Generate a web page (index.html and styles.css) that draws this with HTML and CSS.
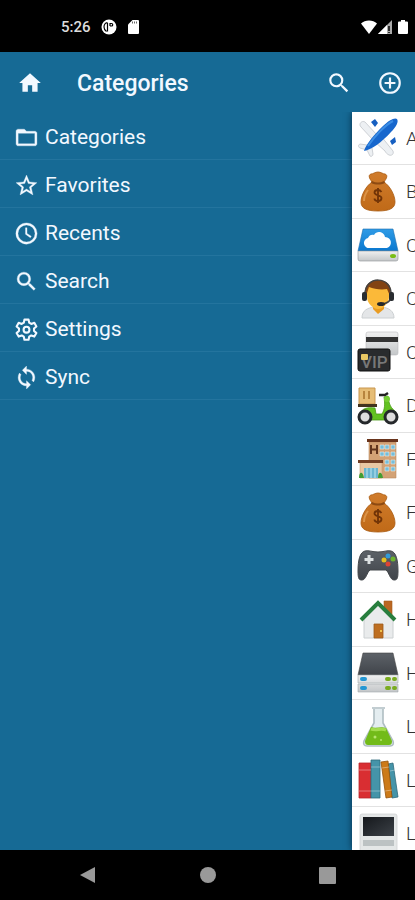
FILE: index.html
```html
<!DOCTYPE html>
<html lang="en">
<head>
  <meta charset="UTF-8">
  <meta name="viewport" content="width=device-width, initial-scale=1.0">
  <title>Categories</title>
  <link rel="stylesheet" href="styles.css">
</head>
<body>
  <!-- Shared drawings -->
  <svg class="defs" width="0" height="0" aria-hidden="true">
    <defs>
      <linearGradient id="bagFill" x1="0" y1="0" x2="0" y2="1">
        <stop offset="0" stop-color="#d07c2c"/><stop offset="1" stop-color="#c06a18"/>
      </linearGradient>
      <linearGradient id="metal" x1="0" y1="0" x2="0" y2="1">
        <stop offset="0" stop-color="#f0f0f0"/><stop offset="1" stop-color="#c4c7c9"/>
      </linearGradient>
      <linearGradient id="dark" x1="0" y1="0" x2="0" y2="1">
        <stop offset="0" stop-color="#5d6268"/><stop offset="1" stop-color="#40444a"/>
      </linearGradient>
      <linearGradient id="screen" x1="0" y1="0" x2="1" y2="1">
        <stop offset="0" stop-color="#15181c"/><stop offset="1" stop-color="#3c4147"/>
      </linearGradient>
      <linearGradient id="skyBlue" x1="0" y1="0" x2="0" y2="1">
        <stop offset="0" stop-color="#2f9be6"/><stop offset="1" stop-color="#0a78cf"/>
      </linearGradient>
      <symbol id="search" viewBox="0 0 24 24">
        <path d="M15.5 14h-.79l-.28-.27A6.47 6.47 0 0 0 16 9.5 6.5 6.5 0 1 0 9.5 16c1.61 0 3.09-.59 4.23-1.57l.27.28v.79l5 4.99L20.49 19l-4.99-5zm-6 0C7.01 14 5 11.99 5 9.5S7.01 5 9.5 5 14 7.01 14 9.5 11.99 14 9.5 14z"/>
      </symbol>
      <symbol id="bag" viewBox="0 0 42 42">
        <path d="M15 11C12 7 11 4 14 3c2 0 4-2 7-2s5 2 7 2c3 1 2 4-1 8 6 4 11 13 11 20 0 6-5 9-17 9S4 37 4 31c0-7 5-16 11-20z" fill="url(#bagFill)" stroke="#a8590f" stroke-width=".8"/>
        <path d="M15 10c4 2 8 2 12 0l1 2c-5 2-9 2-14 0z" fill="#8d4a12"/>
        <path d="M11 19c-3 4-4 7-4 11" fill="none" stroke="#dc9448" stroke-width="2"/>
        <path d="M24.500 21c-1-1.500-2-2-3.500-2-2.500 0-3.500 1-3.500 2.500 0 3.500 7 2 7 5.500 0 2-1.500 3-3.500 3s-3.500-1-3.500-2.500M21 17v15" fill="none" stroke="#713407" stroke-width="1.800"/>
      </symbol>
    </defs>
  </svg>

  <div class="status-bar">
    <span class="clock">5:26</span>
    <svg class="status-icon" viewBox="0 0 16 16"><circle cx="8" cy="8" r="7.500" fill="#fff"/><path d="M6.500 4v8.500M6.500 3.500C4 4 3 6 3 8s1 3.500 2.500 4.500M9 7V4.500h1.500a1.200 1.200 0 0 1 0 2.500H9" fill="none" stroke="#000" stroke-width="1.200"/></svg>
    <svg class="status-icon" viewBox="0 0 16 16"><path d="M7.500 1H13a1 1 0 0 1 1 1v12a1 1 0 0 1-1 1H4a1 1 0 0 1-1-1V5.500z" fill="#fff"/><path d="M7.500 2.500v2M9.500 2.500v2M11.500 2.500v2" stroke="#666"/></svg>
    <div class="signals">
      <svg width="16" height="16" viewBox="0 0 16 16"><path d="M8 15L0 4.500C2 2.500 5 1.500 8 1.500s6 1 8 3z" fill="#fff"/></svg>
      <svg width="16" height="16" viewBox="0 0 16 16"><path d="M1 15L15 1v14z" fill="#aaa"/><path d="M1 15l9-9v9z" fill="#fff"/><path d="M12 7v5M12 13v1" stroke="#000" stroke-width="1.500"/></svg>
      <svg class="battery" width="10" height="16" viewBox="0 0 10 16"><path d="M3 1h4v1.500h2a1 1 0 0 1 1 1V14a1 1 0 0 1-1 1H1a1 1 0 0 1-1-1V3.500a1 1 0 0 1 1-1h2z" fill="#fff"/></svg>
    </div>
  </div>

  <header class="app-bar">
    <button class="icon-button" aria-label="Home"><svg viewBox="0 0 24 24"><path d="M10 20v-6h4v6h5v-8h3L12 3 2 12h3v8z"/></svg></button>
    <h1>Categories</h1>
    <button class="icon-button" aria-label="Search"><svg viewBox="0 0 24 24"><use href="#search"/></svg></button>
    <button class="icon-button" aria-label="Add"><svg viewBox="0 0 24 24"><path d="M13 7h-2v4H7v2h4v4h2v-4h4v-2h-4V7zm-1-5a10 10 0 1 0 0 20 10 10 0 0 0 0-20zm0 18a8 8 0 1 1 0-16 8 8 0 0 1 0 16z"/></svg></button>
  </header>

  <main class="content">
    <nav class="drawer">
      <a href="#"><svg viewBox="0 0 24 24"><path d="M20 6h-8l-2-2H4c-1.100 0-2 .9-2 2v12c0 1.100.9 2 2 2h16c1.100 0 2-.9 2-2V8c0-1.100-.9-2-2-2zm0 12H4V8h16v10z"/></svg>Categories</a>
      <a href="#"><svg viewBox="0 0 24 24"><path d="M22 9.240l-7.190-.62L12 2 9.190 8.630 2 9.240l5.460 4.730L5.820 21 12 17.270 18.180 21l-1.630-7.030L22 9.240zM12 15.400l-3.760 2.270 1-4.280-3.320-2.880 4.380-.38L12 6.100l1.710 4.040 4.380.38-3.320 2.880 1 4.280L12 15.400z"/></svg>Favorites</a>
      <a href="#"><svg viewBox="0 0 24 24"><path d="M12 1.800a10.200 10.200 0 1 0 0 20.400 10.200 10.200 0 0 0 0-20.400zm0 18.400a8.200 8.200 0 1 1 0-16.400 8.200 8.200 0 0 1 0 16.400zM12.500 6.500H11v6.200l4.700 3.300.9-1.300-4.100-2.800z"/></svg>Recents</a>
      <a href="#"><svg viewBox="0 0 24 24"><use href="#search"/></svg>Search</a>
      <a href="#"><svg viewBox="0 0 24 24"><g fill="none" stroke="#f2f8ff" stroke-width="2" stroke-linejoin="round"><path d="M10 2.500h4l.6 3 2 1.200 2.900-1.100 2 3.500-2.300 2v2.200l2.300 2-2 3.500-2.900-1.100-2 1.200-.6 3h-4l-.6-3-2-1.200-2.900 1.100-2-3.500 2.300-2v-2.200l-2.300-2 2-3.500 2.900 1.100 2-1.200z"/><circle cx="12" cy="12.200" r="2.800"/></g></svg>Settings</a>
      <a href="#"><svg viewBox="0 0 24 24"><path d="M12 4V1L8 5l4 4V6c3.310 0 6 2.690 6 6 0 1.010-.25 1.970-.7 2.800l1.460 1.460A7.930 7.930 0 0 0 20 12c0-4.420-3.580-8-8-8zm0 14c-3.310 0-6-2.690-6-6 0-1.010.25-1.970.7-2.800L5.240 7.740A7.930 7.930 0 0 0 4 12c0 4.420 3.580 8 8 8v3l4-4-4-4v3z"/></svg>Sync</a>
    </nav>

    <ul class="category-list">
      <li>
        <svg viewBox="0 0 42 42"><g stroke="#c3c7cc" stroke-width=".8" fill="#edf0f3"><path d="M20 18L8 5C5 3 1 7 4 10l12 13zM24 19l12 15c1 3-1 5-4 4-2-1-3-2-4-4L18 25zM10 28l-7-1c-2 1-2 3 0 4l7 2 3 6c1 1 3 0 3-2l-1-6z"/></g><path d="M14 5l4-3 3 4-3 4zM33 24l5-4 1 5-4 3z" fill="#165fc1"/><path d="M7 34c2-7 10-16 19-25 6-6 12-9 14-7 2 3-1 8-6 13C25 25 14 33 7 34z" fill="#1767cd"/><path d="M11 29C17 20 28 8 36 4" fill="none" stroke="#3b8de4" stroke-width="2"/></svg>
        <span>A</span>
      </li>
      <li><svg viewBox="0 0 42 42"><use href="#bag"/></svg><span>B</span></li>
      <li>
        <svg viewBox="0 0 42 42"><path d="M6 5h30l5 22H1z" fill="url(#skyBlue)" stroke="#1d6dac" stroke-width=".6"/><path d="M1 27h40v8a2 2 0 0 1-2 2H3a2 2 0 0 1-2-2z" fill="url(#metal)" stroke="#8d9296" stroke-width=".6"/><path d="M13 24a5 5 0 0 1-2-10c1-3 4-4 6-3 3-5 10-3 11 2 7 0 8 9 2 11z" fill="#fff"/><ellipse cx="36" cy="32" rx="3" ry="2" fill="#79bd16"/></svg>
        <span>C</span>
      </li>
      <li>
        <svg viewBox="0 0 42 42"><path d="M5 40c0-8 6-10 12-11h8c7 1 12 4 12 11z" fill="#e4e6e8" stroke="#ccd0d2"/><path d="M16 25h11v6l-6 5-5-5z" fill="#e99c22"/><path d="M10 12c0-7 22-7 22 0v7c0 6-6 12-11 12S10 25 10 19z" fill="#fbb939"/><path d="M9 18C6 6 14 2 21 2c9 0 15 5 12 16l-3-7c-6 1-13 0-18-2z" fill="#824313"/><path d="M8 17C7-3 36-3 34 18c0 5-4 8-11 8" fill="none" stroke="#444" stroke-width="1.500"/><rect x="5" y="14" width="5" height="9" rx="2" fill="#292c30"/><rect x="32" y="14" width="5" height="9" rx="2" fill="#292c30"/><ellipse cx="24" cy="26" rx="4" ry="2" fill="#25282b"/></svg>
        <span>C</span>
      </li>
      <li>
        <svg viewBox="0 0 42 42"><rect x="9" y="1" width="32" height="23" rx="2" fill="url(#metal)" stroke="#b8bbbd" stroke-width=".6"/><path d="M9 6h32v5H9z" fill="#333"/><rect x="1" y="18" width="32" height="22" rx="2" fill="#292b2d" stroke="#111"/><text class="card-text" x="4" y="37">VIP</text><rect x="4" y="23" width="7" height="6" rx="1" fill="#e9c864"/></svg>
        <span>C</span>
      </li>
      <li>
        <svg viewBox="0 0 42 42"><path d="M2 3h16v16H2z" fill="#e6bd76" stroke="#c9974f"/><path d="M7 6v8M12 6v8" stroke="#a8712c" stroke-width="1.500"/><path d="M1 19h19v3H1z" fill="#42331e"/><path d="M3 30c1-7 8-8 15-7l1 6h6c3-5 3-10 2-17l4-1c1 9 3 12 8 16l-2 3c-6-1-7 4-10 5H13c0-5-6-7-10-5z" fill="#63c222" stroke="#4a9a17" stroke-width=".8"/><path d="M22 10h6l3-2" fill="none" stroke="#222" stroke-width="2.500"/><circle cx="30" cy="14" r="3" fill="#76cf35"/><g fill="#ddd" stroke="#25282b" stroke-width="3"><circle cx="8" cy="32" r="6"/><circle cx="34" cy="32" r="6"/></g></svg>
        <span>D</span>
      </li>
      <li>
        <svg viewBox="0 0 42 42"><path d="M12 4h27v36H12z" fill="#d3a275" stroke="#b98a60" stroke-width=".6"/><path d="M10 1h31v3H10z" fill="#69341c"/><path d="M14 7v9M20 7v9M14 11.500h6" stroke="#60341d" stroke-width="2"/><g fill="#75bedb" stroke="#e8f0ee" stroke-width=".6"><path d="M23 7h4v4h-4zM28 7h4v4h-4zM34 7h4v4h-4zM23 14h4v4h-4zM28 14h4v4h-4zM34 14h4v4h-4zM28 22h4v4h-4zM34 22h4v4h-4zM28 29h4v4h-4zM34 29h4v4h-4z"/></g><path d="M3 24h22v16H3z" fill="#e9c7a3" stroke="#c49a72" stroke-width=".6"/><path d="M1 22h25v3H1z" fill="#713e25"/><path d="M7 30h14v10H7z" fill="#6bb5d0"/><path d="M14 30v10M10 30v10M18 30v10" stroke="#bfe5f1"/><path d="M2 40c0-7 4-7 5 0M21 40c0-7 4-7 5 0" fill="#429d32"/></svg>
        <span>F</span>
      </li>
      <li><svg viewBox="0 0 42 42"><use href="#bag"/></svg><span>F</span></li>
      <li>
        <svg viewBox="0 0 42 42"><path d="M8 6c4-1 7 1 13 1s9-2 13-1c5 1 7 9 7 20 0 8-1 9-4 9-4 0-5-8-8-10H13c-3 2-4 10-8 10-3 0-4-1-4-9C1 15 3 7 8 6z" fill="url(#dark)" stroke="#44484c"/><path d="M12 10v9M7.500 14.500h9" stroke="#dce0e1" stroke-width="3"/><circle cx="31" cy="11" r="2.500" fill="#329bd7"/><circle cx="27" cy="15" r="2.500" fill="#e6bf20"/><circle cx="36" cy="14" r="2.500" fill="#6cb52e"/><circle cx="31" cy="19" r="2.500" fill="#df4434"/></svg>
        <span>G</span>
      </li>
      <li>
        <svg viewBox="0 0 42 42"><path d="M27 2h8v16h-8z" fill="#bb6722" stroke="#a35a1c" stroke-width=".6"/><path d="M7 18L21 4l15 15v20H7z" fill="#e9ebec" stroke="#ccd0d2"/><path d="M4 21L21 4l17 17" fill="none" stroke="#287e3e" stroke-width="4"/><path d="M17 25h9v14h-9z" fill="#be6e20" stroke="#9c5a1c" stroke-width=".8"/><circle cx="24" cy="32" r="1" fill="#ffe15c"/></svg>
        <span>H</span>
      </li>
      <li>
        <svg viewBox="0 0 42 42"><path d="M6 1h30l5 22H1z" fill="url(#dark)" stroke="#444" stroke-width=".6"/><path d="M1 23h40v8H1zM1 32h40v8H1z" fill="url(#metal)" stroke="#a3a8ab" stroke-width=".6"/><path d="M5 27h3M5 36h3" stroke="#2597d3" stroke-width="4" stroke-linecap="round"/><path d="M30 27h8M30 36h8" stroke="#7aac20" stroke-width="4" stroke-linecap="round" stroke-dasharray="2 5"/></svg>
        <span>H</span>
      </li>
      <li>
        <svg viewBox="0 0 42 42"><path d="M15 2h13M17 3v14L7 35c-1 3 0 5 3 5h23c3 0 4-2 3-5L26 17V3" fill="#e4edf0" stroke="#afbdc2" stroke-width="1.600"/><path d="M14 21c5 2 10-1 15 1l6 13c0 3-1 4-3 4H11c-2 0-3-1-3-4z" fill="#72bb19"/><path d="M14 23c5 2 10-1 15 1" fill="none" stroke="#a3dc4f" stroke-width="3"/><circle cx="18" cy="31" r="1.500" fill="#b6e56e"/><circle cx="24" cy="34" r="1" fill="#b6e56e"/></svg>
        <span>L</span>
      </li>
      <li>
        <svg viewBox="0 0 42 42"><path d="M2 4h12v35H2z" fill="#d92e32" stroke="#b8262b" stroke-width=".8"/><path d="M14 1h9v38h-9z" fill="#4594a9" stroke="#2d6a7b" stroke-width=".8"/><path d="M31 5l5-1 5 34-6 1z" fill="#4594a9" stroke="#2d6a7b" stroke-width=".8"/><path d="M24 3l7-1 4 36-6 1z" fill="#cc7a19" stroke="#95530d" stroke-width=".8"/><path d="M2 11h12M2 32h12M14 8h9M14 32h9M25 9l7-1M28 32l7-1M33 12l5-1" stroke="#fff" opacity=".35"/></svg>
        <span>L</span>
      </li>
      <li>
        <svg viewBox="0 0 42 42"><path d="M5 1h33a2 2 0 0 1 2 2v39H3V3a2 2 0 0 1 2-2z" fill="#e4e7e7" stroke="#d0d3d4" stroke-width=".8"/><path d="M6 4h31v19H6z" fill="url(#screen)"/><path d="M6 27h31v6H6z" fill="#bcc2c3"/></svg>
        <span>L</span>
      </li>
    </ul>
  </main>

  <footer class="nav-bar">
    <button aria-label="Back"><svg viewBox="0 0 18 18"><path d="M16 1v16L1 9z"/></svg></button>
    <button aria-label="Home screen"><svg viewBox="0 0 18 18"><circle cx="9" cy="9" r="8"/></svg></button>
    <button aria-label="Recent apps"><svg viewBox="0 0 18 18"><rect x="1" y="1" width="17" height="17" rx="1"/></svg></button>
  </footer>
</body>
</html>
```
FILE: styles.css
```css
* { box-sizing: border-box; }
body {
  margin: 0;
  height: 100vh;
  display: flex;
  flex-direction: column;
  overflow: hidden;
  background: #000;
  color: #f2f8ff;
  font-family: Roboto, sans-serif;
}
svg { display: block; flex-shrink: 0; }
.defs { position: absolute; }
button { padding: 0; background: none; border: none; cursor: pointer; }

/* Phone status bar */
.status-bar {
  display: flex;
  align-items: center;
  height: 52px;
  padding: 2px 7px 0 61px;
  flex-shrink: 0;
}
.clock { margin-right: 10px; font-size: 15px; font-weight: 500; color: #ddd; }
.status-icon { width: 16px; height: 16px; margin-right: 8px; }
.signals { display: flex; margin-left: auto; }
.battery { margin-left: 5px; }

/* Title bar */
.app-bar {
  display: flex;
  align-items: center;
  height: 60px;
  padding: 2px 11px 0 16px;
  flex-shrink: 0;
  background: #166a95;
}
.app-bar h1 { flex: 1; margin: 0 0 0 33px; font-size: 23px; font-weight: 500; }
.icon-button { display: grid; place-items: center; width: 28px; height: 48px; }
.icon-button + .icon-button { margin-left: 23px; }
.icon-button svg { width: 26px; height: 26px; fill: #f2f8ff; }

/* Drawer and the list beside it */
.content { display: flex; flex: 1; min-height: 0; background: #166a95; }
.drawer { flex: 1; }
.drawer a {
  display: flex;
  align-items: center;
  gap: 6px;
  height: 48px;
  padding: 3px 14px 0;
  border-bottom: 1px solid #23749e;
  color: #f2f8ff;
  font-size: 21px;
  text-decoration: none;
}
.drawer svg { width: 25px; height: 25px; fill: #f2f8ff; stroke: #f2f8ff; stroke-width: .3; }
.category-list {
  width: 63px;
  margin: 0;
  padding: 0;
  overflow: hidden;
  list-style: none;
  background: #fff;
  box-shadow: 0 0 7px #052d48;
  clip-path: inset(0 0 0 -10px);
}
.category-list li {
  display: flex;
  align-items: center;
  gap: 7px;
  height: 53px;
  padding-left: 5px;
  border-bottom: 1px solid #e2e2e2;
  color: #333;
  font-size: 19px;
  font-weight: 300;
}
.category-list li:nth-child(even) { height: 54px; }
.category-list svg { width: 42px; height: 42px; }
.card-text { fill: #777; font-size: 17px; font-weight: 500; }

/* Phone navigation buttons */
.nav-bar {
  display: flex;
  align-items: center;
  justify-content: space-between;
  height: 50px;
  padding: 0 79px;
  flex-shrink: 0;
}
.nav-bar svg { width: 18px; height: 18px; fill: #999; }
```
